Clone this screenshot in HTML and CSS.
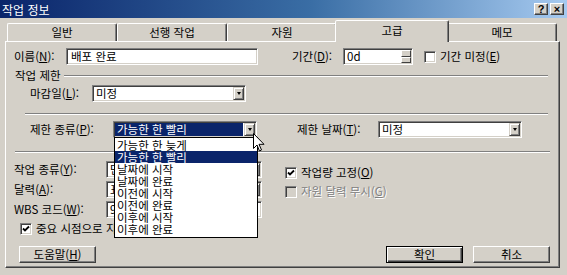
FILE: index.html
```html
<!DOCTYPE html>
<html lang="ko">
<head>
    <meta charset="UTF-8">
    <title>작업 정보</title>
    <link rel="stylesheet" href="styles.css">
</head>
<body>

<div class="window">
    <div class="titlebar">
        <span class="caption">작업 정보</span>
        <div class="caption-btns">
            <span class="cap-btn">?</span>
            <span class="cap-btn">×</span>
        </div>
    </div>

    <div class="tabs">
        <div class="tab">일반</div>
        <div class="tab">선행 작업</div>
        <div class="tab">자원</div>
        <div class="tab active">고급</div>
        <div class="tab">메모</div>
    </div>

    <div class="panel">
        <!-- 이름 / 기간 -->
        <div class="row row-name">
            <span class="lbl lbl-name">이름(<u>N</u>):</span>
            <div class="field name-field">배포 완료</div>
            <span class="lbl lbl-dur">기간(<u>D</u>):</span>
            <div class="field dur-field">
                <span>0d</span>
                <span class="spin"><i class="spin-up"></i><i class="spin-down"></i></span>
            </div>
            <span class="check check-dur"></span>
            <span>기간 미정(<u>E</u>)</span>
        </div>

        <!-- 작업 제한 -->
        <div class="group-title">
            <span>작업 제한</span>
            <span class="group-line"></span>
        </div>

        <div class="row row-deadline">
            <span class="lbl lbl-deadline">마감일(<u>L</u>):</span>
            <div class="field combo deadline-combo">
                <span>미정</span>
                <span class="drop"><i class="arrow"></i></span>
            </div>
        </div>

        <div class="sep sep-1"></div>

        <div class="row row-constraint">
            <span class="lbl lbl-ctype">제한 종류(<u>P</u>):</span>
            <div class="field combo ctype-combo">
                <span class="selected-value">가능한 한 빨리</span>
                <span class="drop"><i class="arrow"></i></span>

                <ul class="dropdown">
                    <li>가능한 한 늦게</li>
                    <li class="hl">가능한 한 빨리</li>
                    <li>날짜에 시작</li>
                    <li>날짜에 완료</li>
                    <li>이전에 시작</li>
                    <li>이전에 완료</li>
                    <li>이후에 시작</li>
                    <li>이후에 완료</li>
                </ul>
            </div>
            <span class="lbl lbl-cdate">제한 날짜(<u>T</u>):</span>
            <div class="field combo cdate-combo">
                <span>미정</span>
                <span class="drop"><i class="arrow"></i></span>
            </div>
        </div>

        <div class="sep sep-2"></div>

        <!-- 하단 옵션 -->
        <div class="lower">
            <div class="lower-left">
                <div class="row">
                    <span class="lbl lbl-lower">작업 종류(<u>Y</u>):</span>
                    <div class="field combo lower-field">
                        <span>단위 기간 고정</span>
                        <span class="drop"><i class="arrow"></i></span>
                    </div>
                </div>
                <div class="row">
                    <span class="lbl lbl-lower">달력(<u>A</u>):</span>
                    <div class="field combo lower-field">
                        <span>표준</span>
                        <span class="drop"><i class="arrow"></i></span>
                    </div>
                </div>
                <div class="row">
                    <span class="lbl lbl-lower">WBS 코드(<u>W</u>):</span>
                    <div class="field lower-field">9</div>
                </div>
                <div class="check-row milestone">
                    <span class="check on"></span>
                    <span>중요 시점으로 지정(<u>K</u>)</span>
                </div>
            </div>
            <div class="lower-right">
                <div class="check-row">
                    <span class="check on"></span>
                    <span>작업량 고정(<u>O</u>)</span>
                </div>
                <div class="check-row disabled">
                    <span class="check off"></span>
                    <span>자원 달력 무시(<u>G</u>)</span>
                </div>
            </div>
        </div>

        <div class="buttons">
            <span class="btn">도움말(<u>H</u>)</span>
            <span class="btn default push-right">확인</span>
            <span class="btn">취소</span>
        </div>
    </div>

    <!-- 마우스 커서 -->
    <svg class="cursor" width="12" height="19" viewBox="0 0 12 19">
        <path d="M0.5 0.5 L0.5 15.5 L4 12 L6.5 18 L8.5 17 L6 11.3 L11 11.3 Z" fill="#fff" stroke="#000" stroke-width="1"/>
    </svg>
</div>

</body>
</html>
```

FILE: styles.css
```css
* { box-sizing: border-box; }

:root {
    --face: #d4d0c8;
    --shadow: #808080;
    --dark: #404040;
    --navy: #0a246a;
}

body {
    margin: 0;
    font-family: "Noto Sans CJK KR", "Noto Sans", sans-serif;
    font-size: 11.5px;
    line-height: 13px;
    color: #000;
    background: var(--face);
}

u { text-decoration: underline; text-underline-offset: 1px; }

.window {
    width: 567px;
    height: 275px;
    background: var(--face);
    position: relative;
    overflow: hidden;
}

/* --- TITRE --- */
.titlebar {
    height: 18px;
    display: flex;
    align-items: center;
    justify-content: space-between;
    padding: 0 3px 0 2px;
    background: linear-gradient(90deg, #0a246a, #3a6ea5 55%, #a6caf0);
    color: #fff;
}

.caption { font-size: 12px; }

.caption-btns { display: flex; gap: 2px; }

.cap-btn {
    width: 14px;
    height: 12px;
    background: var(--face);
    border: 1px solid;
    border-color: #fff var(--dark) var(--dark) #fff;
    box-shadow: inset -1px -1px var(--shadow);
    display: flex;
    align-items: center;
    justify-content: center;
    color: #000;
    font: bold 11px/1 "Liberation Sans", sans-serif;
}

/* --- ONGLETS --- */
.tabs {
    display: flex;
    align-items: flex-end;
    height: 23px;
    margin-left: 7px;
}

.tab {
    width: 110px;
    height: 18px;
    border: 1px solid;
    border-bottom: none;
    border-color: #fff var(--dark) transparent #fff;
    box-shadow: inset -1px 0 var(--shadow);
    border-radius: 2px 2px 0 0;
    text-align: center;
    line-height: 17px;
}

.tab.active {
    width: 114px;
    height: 22px;
    margin: 0 -2px -1px;
    position: relative;
    z-index: 1;
    background: var(--face);
    line-height: 18px;
}

/* --- PANNEAU --- */
.panel {
    margin: 0 7px 0 5px;
    height: 227px;
    border: 1px solid;
    border-color: #fff var(--dark) var(--dark) #fff;
    box-shadow: inset -1px -1px var(--shadow);
}

.row {
    display: flex;
    align-items: center;
    height: 17px;
}

.lbl { flex: none; }

.field {
    flex: none;
    height: 17px;
    background: #fff;
    border: 1px solid;
    border-color: var(--shadow) #fff #fff var(--shadow);
    box-shadow: inset 1px 1px var(--dark), inset -1px -1px var(--face);
    display: flex;
    align-items: center;
    padding-left: 3px;
    white-space: nowrap;
}

.combo { position: relative; }

.drop {
    margin-left: auto;
    margin-right: 1px;
    width: 11px;
    height: 13px;
    background: var(--face);
    border: 1px solid;
    border-color: var(--face) var(--dark) var(--dark) var(--face);
    box-shadow: inset 1px 1px #fff, inset -1px -1px var(--shadow);
    display: flex;
    align-items: center;
    justify-content: center;
}

.arrow {
    width: 0;
    height: 0;
    border-left: 2.5px solid transparent;
    border-right: 2.5px solid transparent;
    border-top: 3px solid #000;
}

.check {
    flex: none;
    width: 12px;
    height: 12px;
    background: #fff;
    border: 1px solid;
    border-color: var(--shadow) #fff #fff var(--shadow);
    box-shadow: inset 1px 1px var(--dark), inset -1px -1px var(--face);
}

.check.on {
    background: #fff url("data:image/svg+xml,%3Csvg xmlns='http://www.w3.org/2000/svg' width='8' height='8'%3E%3Cpath d='M1 3.5 L3 5.5 L7 1.5' fill='none' stroke='%23000' stroke-width='1.8'/%3E%3C/svg%3E") 1px 1px no-repeat;
}

.check.off { background: var(--face); }

/* ligne 1 */
.row-name { margin-top: 6px; padding-left: 8px; }
.lbl-name { width: 52px; }
.name-field { width: 192px; padding-left: 4px; }
.lbl-dur { width: 51px; margin-left: 34px; }
.dur-field { width: 70px; }
.spin {
    margin-left: auto;
    width: 10px;
    height: 13px;
    display: flex;
    flex-direction: column;
    margin-right: 1px;
}
.spin i {
    flex: 1;
    background: var(--face);
    border: 1px solid;
    border-color: #fff var(--dark) var(--dark) #fff;
}
.check-dur { margin: 0 4px 0 11px; }

/* groupe */
.group-title {
    display: flex;
    align-items: center;
    height: 13px;
    margin: 4px 11px 0 9px;
}
.group-line {
    flex: 1;
    margin-left: 3px;
    height: 2px;
    border-top: 1px solid var(--shadow);
    border-bottom: 1px solid #fff;
}

.row-deadline { margin-top: 3px; padding-left: 24px; }
.lbl-deadline { width: 62px; }
.deadline-combo { width: 154px; }

.sep {
    height: 2px;
    border-top: 1px solid var(--shadow);
    border-bottom: 1px solid #fff;
}
.sep-1 { margin: 11px 11px 0 19px; }
.sep-2 { margin: 13px 9px 0 9px; }

.row-constraint { margin-top: 6px; padding-left: 24px; }
.lbl-ctype { width: 83px; }
.ctype-combo { width: 144px; padding-left: 1px; }
.selected-value {
    background: var(--navy);
    color: #fff;
    flex: 1;
    height: 13px;
    padding-left: 2px;
    margin-right: 1px;
}
.lbl-cdate { width: 81px; margin-left: 40px; }
.cdate-combo { width: 144px; }

.dropdown {
    position: absolute;
    top: 100%;
    left: 0;
    width: 144px;
    margin: 0;
    padding: 1px 0 2px;
    list-style: none;
    background: #fff;
    border: 1px solid #000;
    z-index: 5;
}
.dropdown li {
    height: 12px;
    line-height: 12px;
    padding-left: 2px;
}
.dropdown li.hl { background: var(--navy); color: #fff; }

/* bas */
.lower {
    display: flex;
    margin-top: 8px;
}
.lower-left {
    display: flex;
    flex-direction: column;
    gap: 3px;
    padding-left: 8px;
}
.lbl-lower { width: 92px; }
.lower-field { width: 156px; }
.check-row {
    display: flex;
    align-items: center;
    gap: 4px;
    height: 13px;
}
.milestone { margin: 1px 0 0 6px; }
.lower-right {
    display: flex;
    flex-direction: column;
    gap: 6px;
    margin-left: 23px;
    padding-top: 5px;
}
.disabled span:last-child { color: var(--shadow); text-shadow: 1px 1px #fff; }

.buttons {
    display: flex;
    gap: 10px;
    margin: 11px 9px 0 13px;
}
.btn {
    width: 77px;
    height: 17px;
    border: 1px solid;
    border-color: #fff var(--dark) var(--dark) #fff;
    box-shadow: inset -1px -1px var(--shadow);
    display: flex;
    align-items: center;
    justify-content: center;
}
.btn.default {
    border-color: #000;
    box-shadow: inset 1px 1px #fff, inset -1px -1px var(--dark), inset -2px -2px var(--shadow);
}
.push-right { margin-left: auto; }

.cursor {
    position: absolute;
    left: 253px;
    top: 133px;
    z-index: 10;
}
```
